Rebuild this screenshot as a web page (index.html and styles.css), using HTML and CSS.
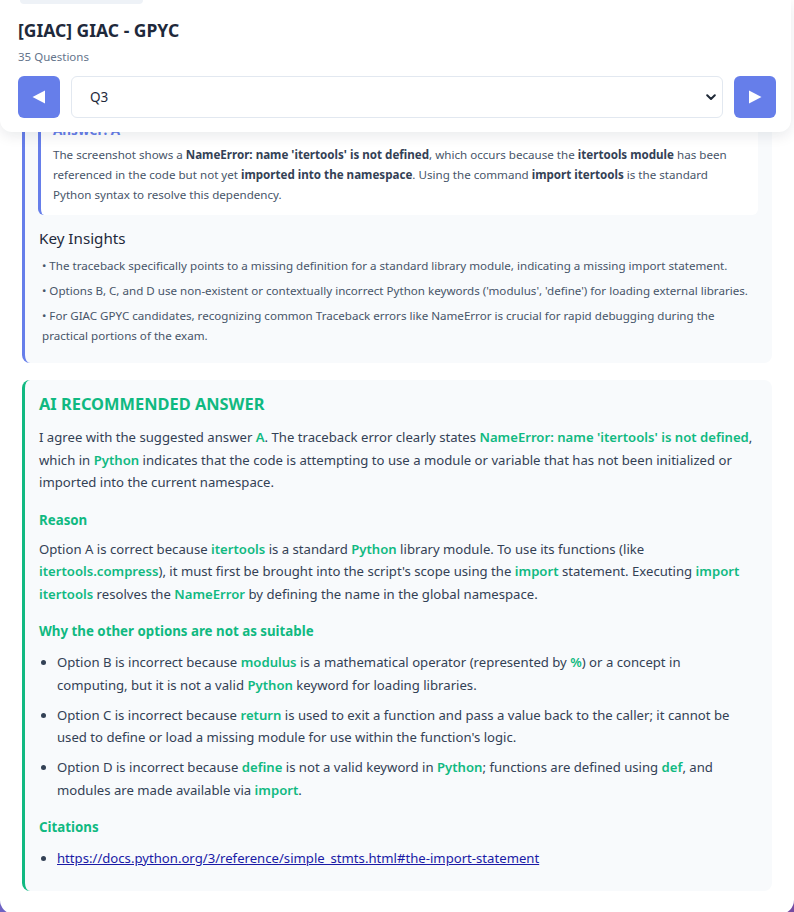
FILE: index.html
```html
<!DOCTYPE html>
<html lang="en">
<head>
<meta charset="utf-8">
<title>[GIAC] GIAC - GPYC</title>
<link rel="stylesheet" href="styles.css">
</head>
<body>
<div class="page">
  <header class="topbar">
    <div class="crumb"></div>
    <h1 class="title">[GIAC] GIAC - GPYC</h1>
    <div class="count">35 Questions</div>
    <div class="nav">
      <button class="navbtn" aria-label="Previous">
        <svg width="14" height="14" viewBox="0 0 14 14"><polygon points="0.5,7 13,0.5 13,13.5" fill="#fff"/></svg>
      </button>
      <div class="select">
        <span>Q3</span>
        <svg class="chev" width="10" height="7" viewBox="0 0 10 7"><polyline points="1.2,1.2 5,5 8.8,1.2" fill="none" stroke="#1f2937" stroke-width="2" stroke-linecap="round" stroke-linejoin="round"/></svg>
      </div>
      <button class="navbtn" aria-label="Next">
        <svg width="14" height="14" viewBox="0 0 14 14"><polygon points="13.5,7 1,0.5 1,13.5" fill="#fff"/></svg>
      </button>
    </div>
  </header>

  <main class="content">
    <section class="card explain">
      <div class="answer">
        <h3 class="answer-title">Answer: A</h3>
        <p class="answer-text">The screenshot shows a <b>NameError: name 'itertools' is not defined</b>, which occurs because the <b>itertools module</b> has been referenced in the code but not yet <b>imported into the namespace</b>. Using the command <b>import itertools</b> is the standard Python syntax to resolve this dependency.</p>
      </div>
      <h4 class="insights-title">Key Insights</h4>
      <p class="insight">• The traceback specifically points to a missing definition for a standard library module, indicating a missing import statement.</p>
      <p class="insight">• Options B, C, and D use non-existent or contextually incorrect Python keywords ('modulus', 'define') for loading external libraries.</p>
      <p class="insight">• For GIAC GPYC candidates, recognizing common Traceback errors like NameError is crucial for rapid debugging during the practical portions of the exam.</p>
    </section>

    <section class="card ai">
      <h2 class="ai-title">AI RECOMMENDED ANSWER</h2>
      <p class="ai-text">I agree with the suggested answer <span class="hl">A</span>. The traceback error clearly states <span class="hl">NameError: name 'itertools' is not defined</span>, which in <span class="hl">Python</span> indicates that the code is attempting to use a module or variable that has not been initialized or imported into the current namespace.</p>
      <h3 class="ai-sub">Reason</h3>
      <p class="ai-text">Option A is correct because <span class="hl">itertools</span> is a standard <span class="hl">Python</span> library module. To use its functions (like <span class="hl">itertools.compress</span>), it must first be brought into the script's scope using the <span class="hl">import</span> statement. Executing <span class="hl">import itertools</span> resolves the <span class="hl">NameError</span> by defining the name in the global namespace.</p>
      <h3 class="ai-sub">Why the other options are not as suitable</h3>
      <ul class="ai-list">
        <li>Option B is incorrect because <span class="hl">modulus</span> is a mathematical operator (represented by <span class="hl">%</span>) or a concept in computing, but it is not a valid <span class="hl">Python</span> keyword for loading libraries.</li>
        <li>Option C is incorrect because <span class="hl">return</span> is used to exit a function and pass a value back to the caller; it cannot be used to define or load a missing module for use within the function's logic.</li>
        <li>Option D is incorrect because <span class="hl">define</span> is not a valid keyword in <span class="hl">Python</span>; functions are defined using <span class="hl">def</span>, and modules are made available via <span class="hl">import</span>.</li>
      </ul>
      <h3 class="ai-sub">Citations</h3>
      <ul class="ai-list cites">
        <li><a href="#">https://docs.python.org/3/reference/simple_stmts.html#the-import-statement</a></li>
      </ul>
    </section>
  </main>
</div>
</body>
</html>
```

FILE: styles.css
```css
* { box-sizing: border-box; }

html, body {
  margin: 0;
  padding: 0;
}

body {
  background: linear-gradient(135deg, #667eea 0%, #764ba2 100%);
  font-family: "Noto Sans", "Open Sans", "Liberation Sans", sans-serif;
  color: #334155;
  min-height: 912px;
}

.page {
  position: relative;
  background: #ffffff;
  border-radius: 0 0 14px 14px;
  padding: 92px 22px 23px 22px;
}

.topbar {
  position: absolute;
  top: 0;
  left: 0;
  width: 791px;
  height: 132px;
  background: #ffffff;
  border-radius: 0 0 12px 12px;
  box-shadow: 0 4px 14px rgba(15, 23, 42, 0.09);
  padding: 0 15px 14px 18px;
  z-index: 10;
}

.crumb {
  width: 123px;
  height: 4px;
  margin-left: 2px;
  background: #eef2f7;
  border-radius: 0 0 10px 10px;
}

.title {
  margin: 14px 0 0 0;
  font-size: 17.5px;
  line-height: 24px;
  font-weight: 700;
  color: #1e293b;
}

.count {
  margin-top: 7px;
  font-size: 11.5px;
  line-height: 16px;
  color: #64748b;
}

.nav {
  margin-top: 11px;
  display: flex;
  gap: 11px;
  align-items: center;
}

.navbtn {
  width: 42px;
  height: 42px;
  flex: 0 0 42px;
  border: none;
  border-radius: 6px;
  background: #667eea;
  display: flex;
  align-items: center;
  justify-content: center;
  padding: 0;
}

.select {
  flex: 1;
  height: 42px;
  border: 1px solid #e2e8f0;
  border-radius: 6px;
  background: #fff;
  display: flex;
  align-items: center;
  justify-content: space-between;
  padding: 0 6px 0 18px;
  font-size: 13.5px;
  color: #1e293b;
}

/* content */
.content {
  display: flex;
  flex-direction: column;
  gap: 17px;
}

.card {
  background: #f8fafc;
  border-radius: 8px;
}

.explain {
  border-left: 3px solid #667eea;
  padding: 16px 14px 17px 13px;
}

.answer {
  background: #ffffff;
  border-left: 3px solid #667eea;
  border-radius: 6px;
  padding: 12px 16px 10px 12px;
}

.answer-title {
  margin: 0 0 5px 0;
  font-size: 13.5px;
  line-height: 20px;
  font-weight: 700;
  color: #667eea;
}

.answer-text {
  margin: 0;
  font-size: 11.6px;
  line-height: 20px;
  color: #475569;
}

.answer-text b {
  color: #334155;
  font-weight: 700;
}

.insights-title {
  margin: 11px 0 6px 1px;
  font-size: 15.2px;
  line-height: 24px;
  font-weight: 400;
  color: #1e293b;
}

.insight {
  margin: 0 0 5px 0;
  padding-left: 4px;
  font-size: 11.6px;
  line-height: 20px;
  color: #475569;
}

.insight:last-child { margin-bottom: 0; }

.ai {
  border-left: 3px solid #10b981;
  padding: 12px 14px 21px 14px;
}

.ai-title {
  margin: 0 0 10px 0;
  font-size: 16.4px;
  line-height: 24px;
  font-weight: 700;
  color: #10b981;
}

.ai-text {
  margin: 0;
  font-size: 13.15px;
  line-height: 22.5px;
  color: #334155;
}

.hl {
  color: #10b981;
  font-weight: 600;
}

.ai-sub {
  margin: 16px 0 8px 0;
  font-size: 13.3px;
  line-height: 20px;
  font-weight: 700;
  color: #10b981;
}

.ai-list {
  margin: 10px 12px 0 0;
  padding-left: 18px;
  font-size: 13.15px;
  line-height: 22.5px;
  color: #334155;
}

.ai-list li { margin-bottom: 7.5px; }
.ai-list li:last-child { margin-bottom: 0; }

.cites { margin-top: 10px; }

.cites a {
  color: #1a1aa6;
  text-decoration: underline;
}
```
